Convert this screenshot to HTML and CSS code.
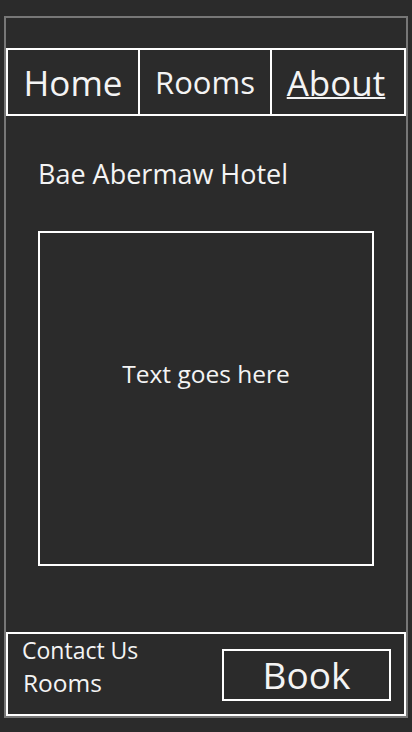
FILE: index.html
```html
<!DOCTYPE html>
<html lang="en">
<head>
<meta charset="utf-8">
<title>Bae Abermaw Hotel</title>
<link rel="stylesheet" href="styles.css">
</head>
<body>
<div class="frame">
  <div class="topbar"></div>
  <nav class="nav">
    <a class="nav-item nav-big" href="#">Home</a>
    <a class="nav-item nav-small" href="#">Rooms</a>
    <a class="nav-item nav-big nav-current" href="#">About</a>
  </nav>
  <main class="main">
    <h1 class="title">Bae Abermaw Hotel</h1>
    <div class="panel">
      <p class="panel-text">Text goes here</p>
    </div>
  </main>
  <footer class="footer">
    <div class="footer-links">
      <a class="footer-link contact" href="#">Contact Us</a>
      <a class="footer-link rooms" href="#">Rooms</a>
    </div>
    <a class="book" href="#">Book</a>
  </footer>
</div>
</body>
</html>
```

FILE: styles.css
```css
html, body {
  margin: 0;
  padding: 0;
  background: #2b2b2b;
}
body {
  font-family: "Open Sans", "DejaVu Sans", sans-serif;
  color: #f4f4f4;
}
a {
  color: inherit;
  text-decoration: none;
}
.frame {
  box-sizing: border-box;
  margin: 16px 4px 0;
  height: 702px;
  border: 2px solid #777;
  display: flex;
  flex-direction: column;
}
.topbar {
  height: 30px;
  flex: none;
}
.nav {
  box-sizing: border-box;
  height: 68px;
  flex: none;
  border: 2px solid #fff;
  display: grid;
  grid-template-columns: 130px 132px 130px;
  column-gap: 0;
}
.nav-item {
  display: flex;
  align-items: center;
  justify-content: center;
}
.nav-item + .nav-item {
  border-left: 2px solid #fff;
}
.nav-big {
  font-size: 35px;
}
.nav-small {
  font-size: 31px;
}
.nav-current {
  text-decoration: underline;
  text-decoration-thickness: 2px;
}
.main {
  flex: 1;
  padding: 39px 0 0 32px;
}
.title {
  margin: 0;
  font-size: 27px;
  font-weight: 400;
}
.panel {
  box-sizing: border-box;
  margin-top: 39px;
  width: 336px;
  height: 335px;
  border: 2px solid #fff;
  padding-top: 124px;
  text-align: center;
}
.panel-text {
  margin: 0;
  font-size: 24.5px;
}
.footer {
  box-sizing: border-box;
  height: 84px;
  flex: none;
  border: 2px solid #fff;
  display: flex;
  justify-content: space-between;
  align-items: flex-start;
  padding: 0 13px 0 14px;
}
.footer-links {
  display: flex;
  flex-direction: column;
}
.contact {
  font-size: 23px;
}
.rooms {
  font-size: 24.5px;
  margin-left: 1px;
}
.book {
  box-sizing: border-box;
  margin-top: 15px;
  width: 169px;
  height: 52px;
  border: 2px solid #fff;
  font-size: 37px;
  line-height: 48px;
  text-align: center;
}
```
